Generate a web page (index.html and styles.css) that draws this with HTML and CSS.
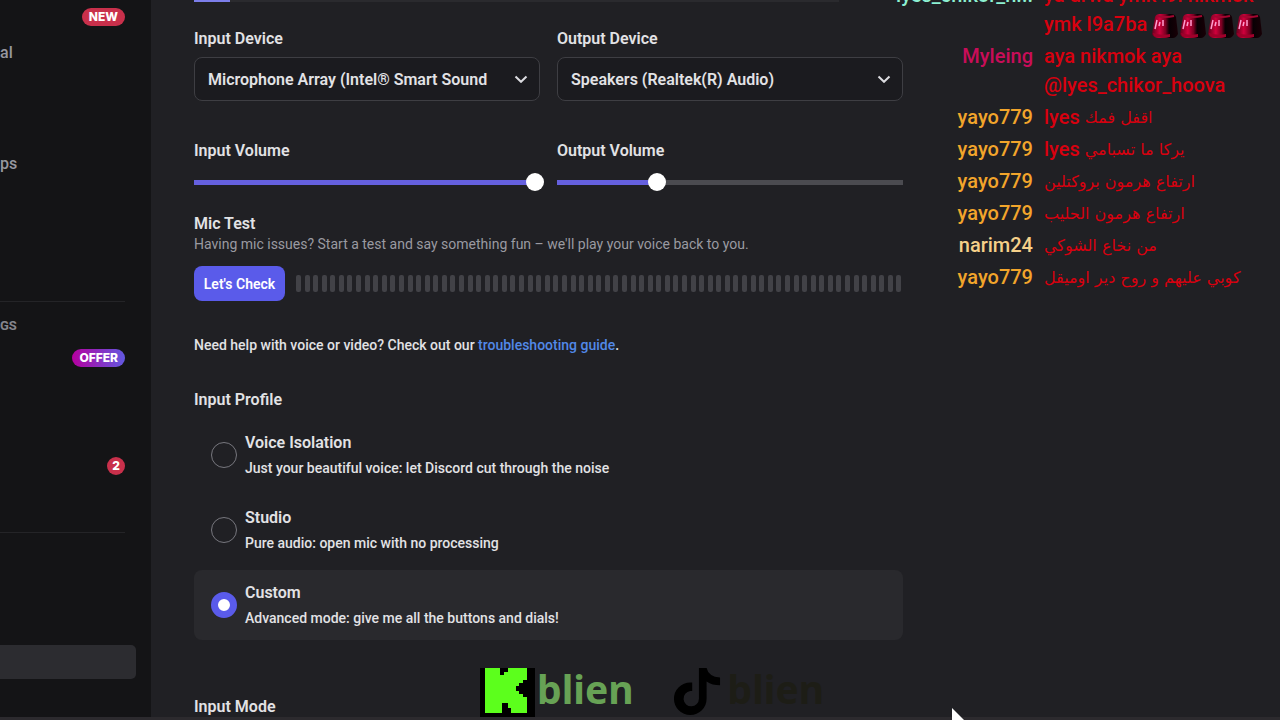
FILE: index.html
```html
<!DOCTYPE html>
<html lang="en">
<head>
<meta charset="utf-8">
<title>Voice settings</title>
<link rel="stylesheet" href="styles.css">
</head>
<body>
<div class="app">
  <nav class="sidebar">
    <div class="nav-row"><span class="badge badge-new">NEW</span></div>
    <div class="nav-row"><a href="#">al</a></div>
    <div class="nav-row"></div>
    <div class="nav-row"></div>
    <div class="nav-row"><a href="#">ps</a></div>
    <hr class="divider divider-first">
    <h2 class="nav-heading">GS</h2>
    <div class="nav-row"><span class="badge badge-offer">OFFER</span></div>
    <div class="nav-row"></div>
    <div class="nav-row"></div>
    <div class="nav-row"><span class="badge badge-count">2</span></div>
    <hr class="divider divider-second">
    <div class="nav-selected"></div>
  </nav>

  <main class="settings">
    <div class="tabs"><span class="tab-active"></span></div>
    <div class="pair devices">
      <div class="field">
        <label class="title" for="in-device">Input Device</label>
        <div class="picker">
          <select id="in-device"><option>Microphone Array (Intel® Smart Sound</option></select>
          <svg class="chevron" viewBox="0 0 14 8"><path d="M1.500 1.500 7 6.800 12.500 1.500"/></svg>
        </div>
      </div>
      <div class="field">
        <label class="title" for="out-device">Output Device</label>
        <div class="picker">
          <select id="out-device"><option>Speakers (Realtek(R) Audio)</option></select>
          <svg class="chevron" viewBox="0 0 14 8"><path d="M1.500 1.500 7 6.800 12.500 1.500"/></svg>
        </div>
      </div>
    </div>
    <div class="pair volumes">
      <div class="field">
        <label class="title" for="in-volume">Input Volume</label>
        <input class="slider" id="in-volume" type="range" min="0" max="200" value="197" style="--fill:98%">
      </div>
      <div class="field">
        <label class="title" for="out-volume">Output Volume</label>
        <input class="slider" id="out-volume" type="range" min="0" max="200" value="58" style="--fill:29%">
      </div>
    </div>
    <section class="mic">
      <h3 class="title">Mic Test</h3>
      <p class="hint">Having mic issues? Start a test and say something fun – we'll play your voice back to you.</p>
      <div class="mic-row">
        <button class="check" type="button">Let's Check</button>
        <div class="meter" id="meter"></div>
      </div>
    </section>
    <p class="help">Need help with voice or video? Check out our <a href="#">troubleshooting guide</a>.</p>
    <fieldset class="profiles">
      <legend class="title">Input Profile</legend>
      <label class="option">
        <input type="radio" name="profile">
        <span class="option-text"><span class="title">Voice Isolation</span><span class="desc">Just your beautiful voice: let Discord cut through the noise</span></span>
      </label>
      <label class="option">
        <input type="radio" name="profile">
        <span class="option-text"><span class="title">Studio</span><span class="desc">Pure audio: open mic with no processing</span></span>
      </label>
      <label class="option">
        <input type="radio" name="profile" checked>
        <span class="option-text"><span class="title">Custom</span><span class="desc">Advanced mode: give me all the buttons and dials!</span></span>
      </label>
    </fieldset>
    <h3 class="title mode">Input Mode</h3>
  </main>

  <aside class="chat">
    <div class="msg"><b class="mint">lyes_chikor_h...</b><p>ya drwa ymk l9l nikmok<br>ymk l9a7ba <span class="emotes"><svg class="emote" viewBox="0 0 26 26"><use href="#siren"/></svg><svg class="emote" viewBox="0 0 26 26"><use href="#siren"/></svg><svg class="emote" viewBox="0 0 26 26"><use href="#siren"/></svg><svg class="emote" viewBox="0 0 26 26"><use href="#siren"/></svg></span></p></div>
    <div class="msg"><b class="pink">Myleing</b><p>aya nikmok aya<br>@lyes_chikor_hoova</p></div>
    <div class="msg"><b class="orange">yayo779</b><p>lyes <span class="ar">اقفل فمك</span></p></div>
    <div class="msg"><b class="orange">yayo779</b><p>lyes <span class="ar">يركا ما تسبامي</span></p></div>
    <div class="msg"><b class="orange">yayo779</b><p><span class="ar">ارتفاع هرمون بروكتلين</span></p></div>
    <div class="msg"><b class="orange">yayo779</b><p><span class="ar">ارتفاع هرمون الحليب</span></p></div>
    <div class="msg"><b class="sand">narim24</b><p><span class="ar">من نخاع الشوكي</span></p></div>
    <div class="msg"><b class="orange">yayo779</b><p><span class="ar">كوبي عليهم و روح دير اوميقل</span></p></div>
  </aside>
</div>

<div class="watermark">
  <svg class="kick" viewBox="0 0 55 49"><path fill="#000" d="M0 0h55v49H0z"/><path fill="#5cff1c" d="M5 0h15v7h4V4h4V0h19v12h-4v3h-4v3h-3v5h3v3h4v3h4v16H31v-5h-3v-5h-6v10H5z"/></svg>
  <span class="mark-green">blien</span>
  <svg class="note" viewBox="0 0 52 50"><path d="M28 0h8q2 9 14 10v8q-8 0-14-4v18a17 17 0 1 1-17-17h2v9h-2a8 8 0 1 0 9 8z"/></svg>
  <span class="mark-dark">blien</span>
</div>
<div class="bottom-edge"></div>
<svg class="cursor" viewBox="0 0 14 13"><path d="M1 1v12h12z"/></svg>

<svg class="defs" aria-hidden="true">
  <defs>
    <linearGradient id="glass" x1="0" x2="1"><stop offset="0" stop-color="#65001c"/><stop offset=".3" stop-color="#d0003c"/><stop offset=".52" stop-color="#7a0022"/><stop offset=".66" stop-color="#080004"/><stop offset="1" stop-color="#180006"/></linearGradient>
    <g id="siren">
      <path fill="url(#glass)" d="M3 4Q4 1 8 1h11q4 0 5 3l2 17q-2 4-5 4H6q-4 0-6-4z"/>
      <path fill="#a0002b" d="M1 20q9 3 17 1v3q-9 2-16-1z"/>
      <path d="M5 7 3 16M11 7v6M8 9l-1 4" stroke="#ff9dd0" stroke-width="1.500" fill="none"/>
      <path d="M5 3q8 2 17 0" stroke="#a30630" stroke-width="2" fill="none"/>
    </g>
  </defs>
</svg>
<script src="meter.js"></script>
</body>
</html>
```
FILE: styles.css
```css
* { box-sizing: border-box; }
body { margin: 0; height: 100vh; overflow: hidden; background: #202024; color: #e2e2e5; font-family: Roboto, sans-serif; font-size: 14px; }
h2, h3, p { margin: 0; }
.app { display: grid; grid-template-columns: 151px minmax(0, 1fr) 396px; height: 100vh; overflow: hidden; }

.sidebar { background: #141416; padding-right: 15px; }
.nav-row { display: flex; align-items: center; height: 37px; padding-right: 11px; }
.nav-heading ~ .nav-row { height: 36px; }
.sidebar > .nav-row:first-child { height: 34px; }
.nav-row a { color: #97979f; text-decoration: none; font-size: 16px; font-weight: 500; }
.badge { margin-left: auto; height: 18px; border-radius: 9px; padding: 0 7px; color: #fff; font: 800 12px/18px Inter, sans-serif; }
.badge-new { background: #c9304b; }
.badge-offer { background: linear-gradient(90deg, #b5009f, #6258e0); }
.badge-count { background: #c9304b; width: 18px; padding: 0; text-align: center; }
.divider { border: 0; height: 1px; margin: 0 11px 0 0; background: #242427; }
.divider-first { margin-top: 119px; }
.divider-second { margin-top: 48px; }
.nav-heading { margin-top: 14px; color: #85858d; font-size: 13px; font-weight: 700; line-height: 20px; margin-bottom: 4px; }
.nav-selected { margin-top: 112px; height: 34px; border-radius: 0 5px 5px 0; background: #2c2c30; }

.settings { padding: 0 0 0 43px; margin-right: -19px; max-width: 752px; }
.tabs { height: 2px; margin-right: 64px; background: #2a2a2e; }
.tab-active { display: block; width: 36px; height: 2px; background: #7c7eea; }
.title { display: block; font-size: 16px; font-weight: 600; line-height: 20px; color: #e2e2e5; }
.pair { display: grid; grid-template-columns: 1fr 1fr; column-gap: 17px; }
.devices { margin-top: 27px; }
.picker { position: relative; margin-top: 8px; }
.picker select { display: block; width: 100%; height: 44px; appearance: none; padding: 0 40px 0 13px; border: 1px solid #3e3e43; border-radius: 8px; background: #1b1b1f; color: #e2e2e5; font: 600 16px Roboto, sans-serif; }
.chevron { position: absolute; right: 12px; top: 18px; width: 14px; height: 8px; fill: none; stroke: #dcdce0; stroke-width: 2; }
.volumes { margin-top: 40px; }
.slider { appearance: none; display: block; width: calc(100% + 18px); height: 18px; margin: 12px -9px 0; background: linear-gradient(90deg, #6560df var(--fill), #4b4b50 var(--fill)) center / calc(100% - 18px) 5px no-repeat; }
.slider::-webkit-slider-thumb { appearance: none; width: 18px; height: 18px; border-radius: 50%; background: #fff; }
.mic { margin-top: 23px; }
.hint { color: #9a9aa1; line-height: 20px; }
.mic-row { display: flex; align-items: center; gap: 11px; margin-top: 12px; }
.check { width: 91px; height: 35px; flex: none; padding: 0; border: 0; border-radius: 8px; background: #5a5bea; color: #fff; font: 600 14px Roboto, sans-serif; }
.meter { flex: 1; display: flex; justify-content: space-between; padding-right: 1px; }
.meter span { width: 5px; height: 17px; border-radius: 2px; background: #424247; }
.help { margin-top: 34px; line-height: 20px; font-weight: 500; }
.help a { color: #5289e8; text-decoration: none; }
.profiles { border: 0; margin: 35px 0 0; padding: 0; min-width: 0; display: grid; gap: 5px; }
.profiles legend { padding: 0; margin-bottom: 10px; }
.option { display: flex; align-items: center; gap: 8px; height: 70px; padding-left: 17px; border-radius: 8px; }
.option:has(:checked) { background: #29292d; }
.option input { appearance: none; width: 26px; height: 26px; margin: 0; border: 1px solid #77777e; border-radius: 50%; }
.option input:checked { border: 7px solid #5a5bea; background: #fff; }
.option-text { display: grid; gap: 5px; }
.desc { line-height: 20px; font-weight: 500; }
.mode { margin-top: 57px; }

.chat { display: flex; flex-direction: column; gap: 3px; margin-top: -19px; font: 500 20px/29px Roboto, sans-serif; }
.msg { display: grid; grid-template-columns: 149px 1fr; column-gap: 11px; height: max-content; white-space: nowrap; }
.msg b { font-weight: 500; text-align: right; }
.msg p { color: #d8000f; }
.ar { font-family: "DejaVu Sans", sans-serif; font-size: 16px; font-weight: 400; line-height: 20px; vertical-align: 1px; }
.emotes { display: inline-flex; gap: 2px; height: 26px; vertical-align: middle; }
.emote { width: 26px; height: 26px; }
.mint { color: #8df0d2; }
.pink { color: #c90d59; }
.orange { color: #f2a52b; }
.sand { color: #f5d089; }

.watermark { position: absolute; left: 480px; bottom: 3px; display: flex; align-items: flex-start; height: 49px; font: 700 39px/42px "Noto Sans", sans-serif; }
.kick { width: 55px; height: 49px; margin-right: 2px; }
.note { width: 50px; height: 48px; margin: 0 6px 0 38px; }
.mark-green { color: #67a255; }
.mark-dark { color: #1d1d16; }
.bottom-edge { position: absolute; left: 0; right: 0; bottom: 0; height: 3px; background: #2c2a2e; }
.cursor { position: absolute; left: 951px; bottom: 0; width: 14px; height: 13px; fill: #fff; }
.defs { position: absolute; width: 0; height: 0; }
```
FILE: meter.js
```js
const meter = document.getElementById("meter");
for (let i = 0; i < 71; i++) meter.append(document.createElement("span"));
```
